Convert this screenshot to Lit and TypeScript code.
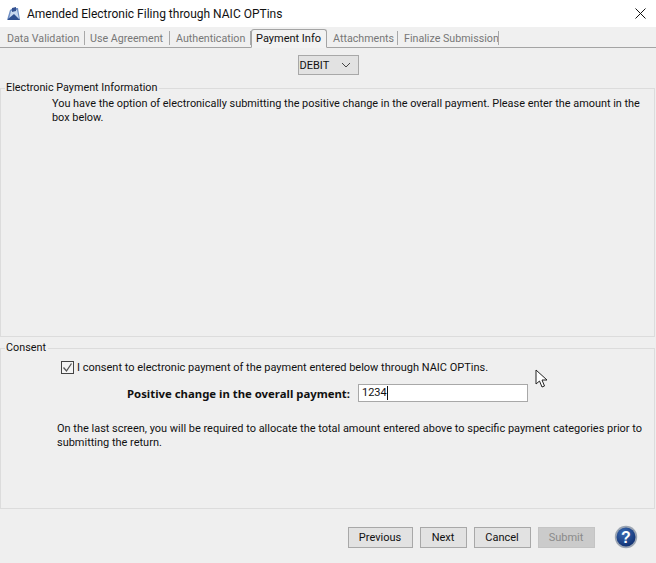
import { LitElement, html, css } from "lit";
import { customElement } from "lit/decorators.js";

@customElement("app-root")
export class AppRoot extends LitElement {
  static styles = css`
    :host { display: block; width: 656px; height: 563px; background: #efefef; font-family: Roboto, "Noto Sans", sans-serif; font-size: 11px; color: #111; position: relative; overflow: hidden; }
    .title { height: 27px; background: #fff; display: flex; align-items: center; padding: 0 10px 0 6px; gap: 5px; font-size: 12px; color: #111; }
    .title span { flex: 1; }
    .title svg { display: block; }
    .tabs { display: flex; align-items: stretch; border-bottom: 1px solid #a4a4a4; background: #f0f0f0; box-sizing: border-box; height: 21px; }
    .tab { box-sizing: border-box; color: #777; font-size: 10.7px; line-height: 23px; position: relative; white-space: nowrap; }
    .tab::after { content: ""; position: absolute; right: 0; top: 4px; bottom: 2px; width: 1px; background: #a8a8a8; }
    .tab.sel { color: #111; font-size: 11px; background: #f2f2f2; border: 1px solid #a4a4a4; border-bottom: 1px solid #f2f2f2; border-radius: 3px 3px 0 0; height: 19px; line-height: 17px; margin-top: 2px; }
    .tab.sel::after { display: none; }
    .w1 { width: 85px; padding-left: 7px; }
    .w2 { width: 85px; padding-left: 5px; }
    .w3 { width: 81px; padding-left: 6px; }
    .w4 { width: 76px; padding-left: 4px; }
    .w5 { width: 71px; padding-left: 6px; }
    .w6 { width: 101px; padding-left: 6px; }
    .selrow { height: 33px; display: flex; justify-content: center; align-items: flex-start; padding-top: 7px; box-sizing: border-box; }
    .combo { width: 61px; height: 20px; box-sizing: border-box; border: 1px solid #a8a8a8; background: #e2e2e2; display: flex; align-items: center; padding: 0 7px 0 1px; justify-content: space-between; }
    fieldset { margin: 0 1px 0 0; padding: 0; border: 1px solid #dcdcdc; box-sizing: border-box; min-width: 0; }
    legend { padding: 0 2px 0 1px; margin-left: 4px; line-height: 14px; color: #111; font-size: 10.8px; }
    .info { height: 256px; }
    .info p { margin: 2px 8px 0 51px; line-height: 14px; font-size: 10.9px; }
    .gap { height: 4px; }
    .consent { height: 168px; }
    .check { display: flex; align-items: center; gap: 3px; margin: 4px 0 0 60px; height: 16px; }
    .box { width: 11px; height: 11px; border: 1px solid #444; background: #f4f4f4; box-sizing: content-box; }
    .box svg { display: block; }
    .amount { display: flex; align-items: center; margin: 9px 0 0 126px; height: 18px; }
    .amount b { font-family: "Noto Sans", sans-serif; font-size: 11.35px; font-weight: 700; width: 231px; white-space: nowrap; }
    .input { width: 170px; height: 18px; box-sizing: border-box; border: 1px solid #a8a8a8; background: #fff; padding-left: 3px; line-height: 16px; display: flex; align-items: center; }
    .caret { width: 1px; height: 14px; background: #111; }
    .note { margin: 20px 8px 0 56px; line-height: 14px; font-size: 10.97px; }
    .buttons { display: flex; align-items: center; padding: 16px 0 0 348px; }
    button { font: inherit; height: 21px; box-sizing: border-box; border: 1px solid #a8a8a8; background: #e2e2e2; color: #111; padding: 0 1px 0 0; margin-right: 7px; }
    .prev { width: 65px; } .next { width: 47px; } .cancel { width: 57px; } .submit { width: 57px; background: #cbcbcb; color: #8a8a8a; margin-right: 19px; border-color: #c4c4c4; }
    .cursor { position: absolute; left: 535px; top: 369px; }
  `;
  render() {
    return html`
      <div class="title">
        <svg width="16" height="16" viewBox="0 0 16 16"><path d="M1 14 L4 4 L7 2 L12 2 L14 14 Z" fill="#6f8fc4"/><path d="M3 13 L5 5 L11 4 L13 13 Z" fill="#c9d8ee"/><path d="M2 13 L8 8 L14 14 L2 14 Z" fill="#2f4f8f"/><path d="M6 2 L10 1 L10 5 L6 6 Z" fill="#34508f"/></svg>
        <span>Amended Electronic Filing through NAIC OPTins</span>
        <svg width="11" height="11" viewBox="0 0 11 11"><path d="M0.5 0.5 L10.5 10.5 M10.5 0.5 L0.5 10.5" stroke="#111" stroke-width="1" fill="none"/></svg>
      </div>
      <div class="tabs">
        <div class="tab w1">Data Validation</div>
        <div class="tab w2">Use Agreement</div>
        <div class="tab w3">Authentication</div>
        <div class="tab sel w4">Payment Info</div>
        <div class="tab w5">Attachments</div>
        <div class="tab w6">Finalize Submission</div>
      </div>
      <div class="selrow"><div class="combo">DEBIT
        <svg width="10" height="6" viewBox="0 0 10 6"><path d="M1 1 L5 5 L9 1" stroke="#444" fill="none"/></svg></div></div>
      <fieldset class="info"><legend>Electronic Payment Information</legend>
        <p>You have the option of electronically submitting the positive change in the overall payment. Please enter the amount in the box below.</p>
      </fieldset>
      <div class="gap"></div>
      <fieldset class="consent"><legend>Consent</legend>
        <div class="check"><div class="box"><svg width="11" height="11" viewBox="0 0 11 11"><path d="M1.5 5.5 L4.5 9 L9.5 1.5" stroke="#555" stroke-width="1.3" fill="none"/></svg></div>I consent to electronic payment of the payment entered below through NAIC OPTins.</div>
        <div class="amount"><b>Positive change in the overall payment:</b><div class="input">1234<span class="caret"></span></div></div>
        <div class="note">On the last screen, you will be required to allocate the total amount entered above to specific payment categories prior to submitting the return.</div>
      </fieldset>
      <div class="buttons">
        <button class="prev">Previous</button><button class="next">Next</button><button class="cancel">Cancel</button><button class="submit">Submit</button>
        <svg width="24" height="24" viewBox="0 0 24 24"><defs><radialGradient id="g" cx="0.4" cy="0.3" r="0.8"><stop offset="0" stop-color="#3b6cb5"/><stop offset="1" stop-color="#0d2a6b"/></radialGradient></defs><circle cx="12" cy="12" r="11.2" fill="#9aa4b2"/><circle cx="12" cy="12" r="9.5" fill="url(#g)"/><text x="12" y="17.5" text-anchor="middle" font-family="Liberation Sans" font-weight="700" font-size="16" fill="#fff">?</text></svg>
      </div>
      <svg class="cursor" width="13" height="20" viewBox="0 0 13 20"><path d="M1 1 L1 15 L4.5 12 L7 18 L9.5 17 L7 11 L12 11 Z" fill="#fff" stroke="#222" stroke-width="1"/></svg>
    `;
  }
}
